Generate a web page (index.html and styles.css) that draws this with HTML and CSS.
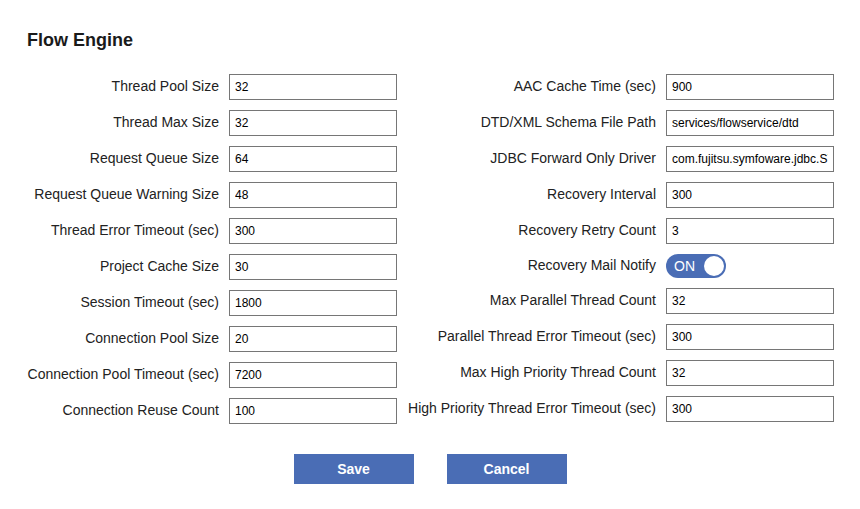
FILE: index.html
```html
<!DOCTYPE html>
<html>
<head>
<meta charset="utf-8">
<link rel="stylesheet" href="styles.css">
</head>
<body>
<div class="page">
  <h1 class="title">Flow Engine</h1>
  <div class="columns">
    <div class="col col-left">
      <label class="lbl">Thread Pool Size</label><input class="inp" type="text" value="32">
      <label class="lbl">Thread Max Size</label><input class="inp" type="text" value="32">
      <label class="lbl">Request Queue Size</label><input class="inp" type="text" value="64">
      <label class="lbl">Request Queue Warning Size</label><input class="inp" type="text" value="48">
      <label class="lbl">Thread Error Timeout (sec)</label><input class="inp" type="text" value="300">
      <label class="lbl">Project Cache Size</label><input class="inp" type="text" value="30">
      <label class="lbl">Session Timeout (sec)</label><input class="inp" type="text" value="1800">
      <label class="lbl">Connection Pool Size</label><input class="inp" type="text" value="20">
      <label class="lbl">Connection Pool Timeout (sec)</label><input class="inp" type="text" value="7200">
      <label class="lbl">Connection Reuse Count</label><input class="inp" type="text" value="100">
    </div>
    <div class="col col-right">
      <label class="lbl">AAC Cache Time (sec)</label><input class="inp" type="text" value="900">
      <label class="lbl">DTD/XML Schema File Path</label><input class="inp" type="text" value="services/flowservice/dtd">
      <label class="lbl">JDBC Forward Only Driver</label><input class="inp" type="text" value="com.fujitsu.symfoware.jdbc.SYMDriver">
      <label class="lbl">Recovery Interval</label><input class="inp" type="text" value="300">
      <label class="lbl">Recovery Retry Count</label><input class="inp" type="text" value="3">
      <label class="lbl">Recovery Mail Notify</label>
      <div class="toggle-cell"><span class="toggle"><span class="toggle-text">ON</span><span class="knob"></span></span></div>
      <label class="lbl">Max Parallel Thread Count</label><input class="inp" type="text" value="32">
      <label class="lbl">Parallel Thread Error Timeout (sec)</label><input class="inp" type="text" value="300">
      <label class="lbl">Max High Priority Thread Count</label><input class="inp" type="text" value="32">
      <label class="lbl">High Priority Thread Error Timeout (sec)</label><input class="inp" type="text" value="300">
    </div>
  </div>
  <div class="actions">
    <button class="btn">Save</button>
    <button class="btn">Cancel</button>
  </div>
</div>
</body>
</html>
```

FILE: styles.css
```css
html, body {
  margin: 0;
  padding: 0;
  background: #ffffff;
}
body {
  font-family: "Liberation Sans", Arial, sans-serif;
  color: #222222;
}
.page {
  width: 860px;
  padding: 29px 0 0 0;
  box-sizing: border-box;
}
.title {
  margin: 0 0 23px 27px;
  font-size: 18px;
  line-height: 22px;
  font-weight: bold;
  color: #1a1a1a;
}
.columns {
  display: flex;
  align-items: flex-start;
  padding-left: 20px;
  gap: 10px;
}
.col {
  display: grid;
  column-gap: 10px;
  row-gap: 10px;
  align-items: center;
  align-content: start;
}
.col-left {
  grid-template-columns: 199px 168px;
}
.col-right {
  grid-template-columns: 249px 168px;
}
.lbl {
  text-align: right;
  font-size: 14px;
  line-height: 18px;
  color: #222222;
  white-space: nowrap;
  position: relative;
  top: -1px;
}
.inp {
  box-sizing: border-box;
  width: 168px;
  height: 26px;
  margin: 0;
  border: 1px solid #767676;
  border-radius: 0;
  padding: 0 5px;
  font-family: "Liberation Sans", Arial, sans-serif;
  font-size: 12px;
  color: #000000;
  background: #ffffff;
  outline: none;
}
.toggle-cell {
  height: 24px;
  display: flex;
  align-items: center;
}
.toggle {
  position: relative;
  display: flex;
  align-items: center;
  width: 60px;
  height: 24px;
  border-radius: 12px;
  background: #4a6db5;
  box-sizing: border-box;
}
.toggle-text {
  color: #ffffff;
  font-size: 14px;
  margin-left: 8px;
}
.knob {
  position: absolute;
  right: 2px;
  top: 2px;
  width: 20px;
  height: 20px;
  border-radius: 50%;
  background: #ffffff;
}
.actions {
  display: flex;
  justify-content: center;
  gap: 33px;
  margin-top: 30px;
}
.btn {
  width: 120px;
  height: 30px;
  border: none;
  border-radius: 0;
  background: #4a6db5;
  color: #ffffff;
  font-family: "Liberation Sans", Arial, sans-serif;
  font-size: 14px;
  font-weight: bold;
  padding: 0;
  cursor: pointer;
}
```
